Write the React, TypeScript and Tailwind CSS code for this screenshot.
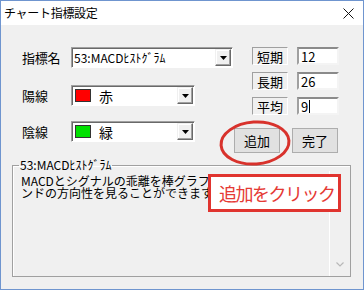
import React from "react";

const FONT = { fontFamily: '"Noto Sans CJK JP", "Noto Sans", sans-serif' };

function Arrow() {
  return (
    <svg width="7" height="4" viewBox="0 0 7 4">
      <path d="M0 0h7L3.5 4z" fill="#000" />
    </svg>
  );
}

function Combo({ className, children }: { className: string; children: React.ReactNode }) {
  return (
    <div
      className={
        "flex h-[21px] border border-t-[#a0a0a0] border-l-[#a0a0a0] border-r-white border-b-white bg-white p-[1px] shadow-[inset_1px_1px_0_#696969] " +
        className
      }
    >
      <div className="flex flex-1 items-center overflow-hidden pl-[1px] whitespace-nowrap">{children}</div>
      <div className="flex w-[16px] items-center justify-center border border-t-[#f0f0f0] border-l-[#f0f0f0] border-r-[#696969] border-b-[#696969] bg-[#f0f0f0] shadow-[inset_-1px_-1px_0_#a0a0a0,inset_1px_1px_0_#ffffff]">
        <Arrow />
      </div>
    </div>
  );
}

function ParamRow({ label, value, caret }: { label: string; value: string; caret?: boolean }) {
  return (
    <div className="flex h-[18px] items-center">
      <div className="flex h-[18px] w-[36px] items-center justify-center border border-t-[#a0a0a0] border-l-[#a0a0a0] border-r-white border-b-white text-[13px] leading-none text-[#000]">
        {label}
      </div>
      <div className="ml-[9px] flex h-[18px] w-[42px] items-center border-2 border-t-[#8a8a8a] border-l-[#a0a0a0] border-r-[#f4f4f4] border-b-[#f4f4f4] bg-white pl-[2px] text-[13px] leading-none text-black">
        {value}
        {caret && <span className="ml-[1px] inline-block h-[13px] w-[1px] bg-black" />}
      </div>
    </div>
  );
}

export default function App() {
  return (
    <div
      style={FONT}
      className="relative flex h-[290px] w-[364px] flex-col overflow-hidden border border-[#6f95cf] bg-[#f0f0f0] text-black"
    >
      {/* title bar */}
      <div className="flex h-[24px] items-center justify-between bg-white pl-[3px] pr-[9px]">
        <span className="text-[12px] leading-none tracking-[-0.3px]">チャート指標設定</span>
        <svg width="11" height="11" viewBox="0 0 11 11">
          <path d="M0.5 0.5L10.5 10.5M10.5 0.5L0.5 10.5" stroke="#111" strokeWidth="1" />
        </svg>
      </div>

      {/* body */}
      <div className="flex flex-col pl-[21px] pt-[22px]">
        <div className="flex">
          <div className="flex w-[211px] flex-col gap-[17px]">
            <div className="flex items-center">
              <span className="w-[49px] text-[13px] leading-none tracking-[-0.3px]">指標名</span>
              <Combo className="w-[162px]">
                <span className="text-[12px] leading-none">53:MACDﾋｽﾄｸﾞﾗﾑ</span>
              </Combo>
            </div>
            <div className="flex items-center">
              <span className="w-[49px] text-[13px] leading-none">陽線</span>
              <Combo className="w-[124px]">
                <span className="ml-[1px] h-[13px] w-[16px] border border-[#333] bg-[#ff0000]" />
                <span className="ml-[8px] text-[14px] leading-none">赤</span>
              </Combo>
            </div>
          </div>
          <div className="ml-[19px] flex flex-col gap-[7px]">
            <ParamRow label="短期" value="12" />
            <ParamRow label="長期" value="26" />
            <ParamRow label="平均" value="9" caret />
          </div>
        </div>

        <div className="mt-[6px] flex items-start">
          <div className="flex items-center">
            <span className="w-[49px] text-[13px] leading-none">陰線</span>
            <Combo className="w-[124px]">
              <span className="ml-[1px] h-[13px] w-[16px] border border-[#333] bg-[#00e000]" />
              <span className="ml-[8px] text-[14px] leading-none">緑</span>
            </Combo>
          </div>
          <button className="ml-[39px] mt-[7px] flex h-[25px] w-[46px] items-center justify-center border border-[#adadad] bg-[#e1e1e1] text-[13px] leading-none">
            追加
          </button>
          <button className="ml-[12px] mt-[7px] flex h-[25px] w-[46px] items-center justify-center border border-[#adadad] bg-[#e1e1e1] text-[13px] leading-none">
            完了
          </button>
        </div>
      </div>

      {/* group box */}
      <fieldset className="ml-[11px] mt-[6px] flex h-[118px] w-[339px] flex-col border border-[#a0a0a0] shadow-[inset_1px_1px_0_#ffffff]">
        <legend className="ml-[6px] px-[1px] text-[12px] leading-[12px]">53:MACDﾋｽﾄｸﾞﾗﾑ</legend>
        <div className="flex h-[105px]">
          <div className="flex-1 overflow-hidden pl-[8px] pt-[4px] text-[12px] leading-[12px] whitespace-nowrap">
            <div>MACDとシグナルの乖離を棒グラフで表示します。トレ</div>
            <div>ンドの方向性を見ることができます。</div>
          </div>
          <div className="flex w-[21px] flex-col items-center justify-end border-l border-white pb-[9px]">
            <svg width="8" height="5" viewBox="0 0 8 5">
              <path d="M0.5 0.5L4 4L7.5 0.5" stroke="#b8b8b8" strokeWidth="1.2" fill="none" />
            </svg>
          </div>
        </div>
      </fieldset>

      {/* annotation overlays */}
      <svg className="absolute left-[216px] top-[116px]" width="78" height="52" viewBox="0 0 78 52">
        <ellipse
          cx="38"
          cy="26"
          rx="34"
          ry="21"
          transform="rotate(-4 38 26)"
          fill="none"
          stroke="#d8322c"
          strokeWidth="3"
        />
      </svg>
      <div className="absolute left-[207px] top-[173px] flex h-[38px] w-[133px] items-center border-[3px] border-[#e0342f] bg-white pl-[8px]">
        <span className="text-[18px] leading-none tracking-[-1.5px] text-[#e53a35]">追加をクリック</span>
      </div>
    </div>
  );
}
